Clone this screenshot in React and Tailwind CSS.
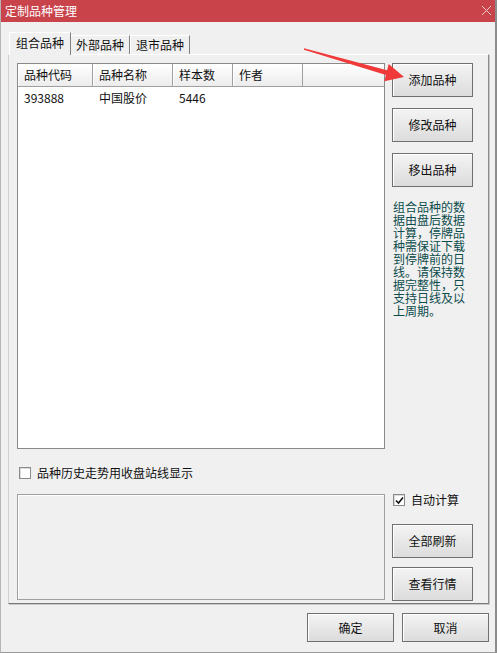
import React from 'react';

const font = { fontFamily: '"Noto Sans CJK SC", "Noto Sans", sans-serif' };

const Btn = ({ children, className = '' }) => (
    <div className={`flex items-center justify-center border border-[#707070] bg-linear-to-b from-[#f4f4f4] to-[#dcdcdc] shadow-[inset_1px_1px_0_#ffffff] text-[12px] text-[#111] ${className}`}>
        {children}
    </div>
);

const Check = ({ checked, label }) => (
    <div className="flex items-center gap-[6px] text-[12px] leading-[14px] text-[#111]">
        <div className="w-[12px] h-[12px] border border-[#8a8a8a] bg-white shadow-[inset_1px_1px_0_#dcdcdc] flex items-center justify-center">
            {checked && (
                <svg width="9" height="9" viewBox="0 0 9 9">
                    <path d="M1 4.5 L3.5 7 L8 1.5" stroke="#111" strokeWidth="1.6" fill="none" />
                </svg>
            )}
        </div>
        <span>{label}</span>
    </div>
);

const cols = [
    { name: '品种代码', w: 'w-[75px]' },
    { name: '品种名称', w: 'w-[80px]' },
    { name: '样本数', w: 'w-[60px]' },
    { name: '作者', w: 'w-[70px]' },
];

const rows = [{ code: '393888', name: '中国股价', count: '5446', author: '' }];

const note = ['组合品种的数', '据由盘后数据', '计算，停牌品', '种需保证下载', '到停牌前的日', '线。请保持数', '据完整性，只', '支持日线及以', '上周期。'];

export default function App() {
    return (
        <div style={font} className="relative w-[497px] h-[653px] bg-[#f0f0f0] border-l border-r-2 border-b border-l-[#b5b5b5] border-r-[#8c8c8c] border-b-[#9a9a9a] flex flex-col overflow-hidden">
            {/* title bar */}
            <div className="h-[22px] bg-[#c9434b] flex items-center justify-between pl-[5px] pr-[4px] -ml-px -mr-[2px]">
                <span className="text-white text-[12px] leading-[14px]">定制品种管理</span>
                <svg width="11" height="11" viewBox="0 0 11 11" className="mr-[1px] mb-[2px]">
                    <path d="M1 1 L10 10 M10 1 L1 10" stroke="#f3c9cc" strokeWidth="1" />
                </svg>
            </div>

            <div className="flex flex-col pl-[7px] pr-[6px] pt-[10px]">
                {/* tabs */}
                <div className="flex items-end h-[22px] pl-[1px] relative z-10 text-[12px] leading-[14px] text-[#111]">
                    <div className="h-[23px] -mb-px w-[62px] bg-[#f0f0f0] border-l border-t border-r border-l-white border-t-white border-r-[#808080] flex items-center justify-center pb-[2px]">组合品种</div>
                    <div className="h-[19px] w-[59px] border-t border-r border-t-white border-r-[#808080] flex items-center justify-center">外部品种</div>
                    <div className="h-[19px] w-[60px] border-l border-t border-r border-l-white border-t-white border-r-[#808080] flex items-center justify-center">退市品种</div>
                </div>

                {/* panel */}
                <div className="h-[550px] border border-t-white border-l-[#d0d0d0] border-r-[#8a8a8a] border-b-[#7a7a7a] shadow-[1px_1px_0_#c8c8c8] flex flex-col pl-[8px] pr-[15px] pt-[8px]">
                    <div className="flex gap-[7px]">
                        {/* list */}
                        <div className="w-[368px] h-[386px] bg-white border border-[#8a8a8a] flex flex-col text-[12px] leading-[14px] text-[#111]">
                            <div className="flex h-[23px] border-b border-[#a0a0a0]">
                                {cols.map((c) => (
                                    <div key={c.name} className={`${c.w} h-full flex items-center pl-[6px] border-r border-[#a0a0a0] bg-linear-to-b from-white to-[#ececec] shadow-[inset_1px_1px_0_#ffffff]`}>
                                        {c.name}
                                    </div>
                                ))}
                                <div className="flex-1 h-full bg-linear-to-b from-white to-[#ececec]" />
                            </div>
                            {rows.map((r) => (
                                <div key={r.code} className="flex h-[22px] items-center">
                                    <div className="w-[75px] pl-[6px]">{r.code}</div>
                                    <div className="w-[80px] pl-[6px]">{r.name}</div>
                                    <div className="w-[60px] pl-[6px]">{r.count}</div>
                                    <div className="w-[70px] pl-[6px]">{r.author}</div>
                                </div>
                            ))}
                        </div>

                        {/* buttons */}
                        <div className="w-[81px] flex flex-col">
                            <Btn className="h-[34px]">添加品种</Btn>
                            <Btn className="h-[34px] mt-[11px]">修改品种</Btn>
                            <Btn className="h-[34px] mt-[11px]">移出品种</Btn>
                            <div className="mt-[13px] pl-[1px] text-[12px] leading-[13px] text-[#0c4c4c]">
                                {note.map((l) => (
                                    <div key={l} className="whitespace-nowrap">{l}</div>
                                ))}
                            </div>
                        </div>
                    </div>

                    <div className="mt-[17px] pl-[2px]">
                        <Check label="品种历史走势用收盘站线显示" />
                    </div>

                    <div className="flex gap-[7px] mt-[14px]">
                        <div className="w-[368px] h-[106px] border border-[#a0a0a0] shadow-[inset_1px_1px_0_#ffffff] bg-[#f0f0f0]" />
                        <div className="w-[81px] flex flex-col">
                            <div className="pl-[1px] -mt-[1px]">
                                <Check checked label="自动计算" />
                            </div>
                            <Btn className="h-[34px] mt-[17px]">全部刷新</Btn>
                            <Btn className="h-[34px] mt-[9px]">查看行情</Btn>
                        </div>
                    </div>
                </div>

                {/* footer */}
                <div className="flex justify-end gap-[8px] mt-[9px]">
                    <Btn className="w-[87px] h-[29px]">确定</Btn>
                    <Btn className="w-[87px] h-[29px]">取消</Btn>
                </div>
            </div>

            {/* annotation arrow */}
            <svg className="absolute left-0 top-0 pointer-events-none" width="497" height="653" viewBox="0 0 497 653">
                <polygon points="303,48.3 386.1,70.2 387.7,63.9 403,77 383.3,81.3 384.9,75 303,49.8" fill="#f03a3a" />
            </svg>
        </div>
    );
}
